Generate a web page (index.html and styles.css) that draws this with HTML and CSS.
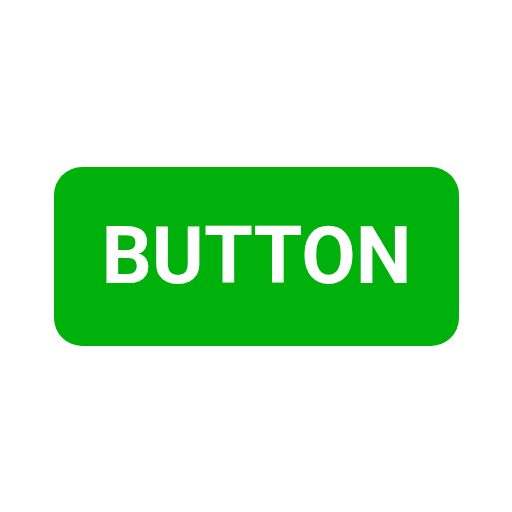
FILE: index.html
```html
<!DOCTYPE html>
<html lang="en">
<head>
  <meta charset="UTF-8" />
  <title>Button</title>
  <link rel="stylesheet" href="styles.css">
</head>
<body>
  <div class="stage">
    <button class="big-btn">BUTTON</button>
  </div>
</body>
</html>
```

FILE: styles.css
```css
html, body {
  margin: 0;
  padding: 0;
  background: #fff;
}
.stage {
  width: 512px;
  height: 512px;
  display: flex;
  justify-content: center;
  align-items: center;
}
.big-btn {
  width: 405px;
  height: 179px;
  margin-left: 1px;
  background: #00b10b;
  color: #fff;
  border: none;
  border-radius: 28px;
  font-family: Roboto, sans-serif;
  font-weight: 700;
  font-size: 79px;
  padding: 0;
  cursor: pointer;
}
```
